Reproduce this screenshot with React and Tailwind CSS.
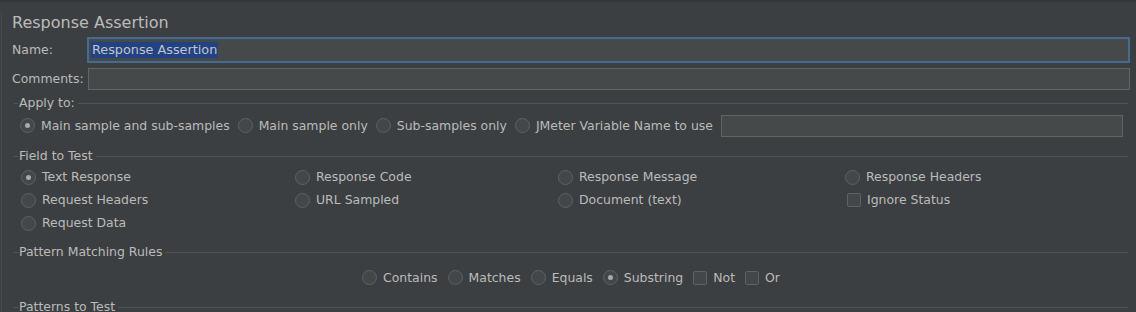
import React from 'react'

function Radio({ checked, label }) {
  return (
    <div className="flex items-center gap-[6px] whitespace-nowrap">
      <span className="w-[15px] h-[15px] rounded-full border border-[#5f6263] bg-[#43474a] flex items-center justify-center shrink-0">
        {checked && <span className="w-[5px] h-[5px] rounded-full bg-[#a9a9a9]" />}
      </span>
      <span>{label}</span>
    </div>
  )
}

function Check({ label }) {
  return (
    <div className="flex items-center gap-[6px] whitespace-nowrap">
      <span className="w-[14px] h-[14px] rounded-[2px] border border-[#5f6263] bg-[#43474a] shrink-0" />
      <span>{label}</span>
    </div>
  )
}

function GroupTitle({ title, className = '' }) {
  return (
    <div className={`flex items-center h-[16px] ${className}`}>
      <span className="w-[4px] h-px bg-[#525456]" />
      <span className="px-[1px] leading-[16px]">{title}</span>
      <span className="flex-1 h-px bg-[#525456] ml-[2px]" />
    </div>
  )
}

export default function App() {
  return (
    <div
      className="w-[1136px] h-[312px] overflow-hidden bg-[#3c3f41] text-[#bbbbbb] text-[12.45px] border-t-2 border-[#333537]"
      style={{ fontFamily: '"DejaVu Sans", sans-serif' }}
    >
      <div className="h-full ml-[1px] border-l border-[#4a4c4e] pl-[10px] pr-[6px]">
        {/* Title */}
        <div className="mt-[11px] h-[20px] text-[16px] leading-[20px]">Response Assertion</div>

        {/* Name */}
        <div className="mt-[4px] flex items-center h-[26px]">
          <span className="w-[75px]">Name:</span>
          <div className="flex-1 h-[26px] border-2 border-[#466b92] bg-[#45494a] flex items-center pl-[2px]">
            <span className="bg-[#214283] text-[#c4c4c4] px-[1px] text-[12.8px] leading-[16px]">Response Assertion</span>
          </div>
        </div>

        {/* Comments */}
        <div className="mt-[5px] flex items-center h-[22px]">
          <span className="w-[76px]">Comments:</span>
          <div className="flex-1 h-[22px] border border-[#646464] bg-[#45494a]" />
        </div>

        <div className="pl-[2px] pr-[2px]">
          {/* Apply to */}
          <GroupTitle title="Apply to:" className="mt-[5px]" />
          <div className="mt-[4px] h-[22px] flex items-center gap-[8px] pl-[6px] pr-[5px]">
            <Radio checked label="Main sample and sub-samples" />
            <Radio label="Main sample only" />
            <Radio label="Sub-samples only" />
            <Radio label="JMeter Variable Name to use" />
            <div className="flex-1 h-[22px] border border-[#646464] bg-[#45494a]" />
          </div>

          {/* Field to Test */}
          <GroupTitle title="Field to Test" className="mt-[11px]" />
          <div className="mt-[2px] pl-[7px] grid grid-cols-[274px_263px_287px_1fr]">
            <div className="h-[23px] flex items-center"><Radio checked label="Text Response" /></div>
            <div className="h-[23px] flex items-center"><Radio label="Response Code" /></div>
            <div className="h-[23px] flex items-center"><Radio label="Response Message" /></div>
            <div className="h-[23px] flex items-center"><Radio label="Response Headers" /></div>
            <div className="h-[23px] flex items-center"><Radio label="Request Headers" /></div>
            <div className="h-[23px] flex items-center"><Radio label="URL Sampled" /></div>
            <div className="h-[23px] flex items-center"><Radio label="Document (text)" /></div>
            <div className="h-[23px] flex items-center pl-[2px]"><Check label="Ignore Status" /></div>
            <div className="h-[23px] flex items-center"><Radio label="Request Data" /></div>
          </div>

          {/* Pattern Matching Rules */}
          <GroupTitle title="Pattern Matching Rules" className="mt-[9px]" />
          <div className="mt-[7px] h-[22px] flex items-center justify-center gap-[10px]">
            <Radio label="Contains" />
            <Radio label="Matches" />
            <Radio label="Equals" />
            <Radio checked label="Substring" />
            <Check label="Not" />
            <Check label="Or" />
          </div>

          {/* Patterns to Test */}
          <GroupTitle title="Patterns to Test" className="mt-[10px]" />
        </div>
      </div>
    </div>
  )
}
